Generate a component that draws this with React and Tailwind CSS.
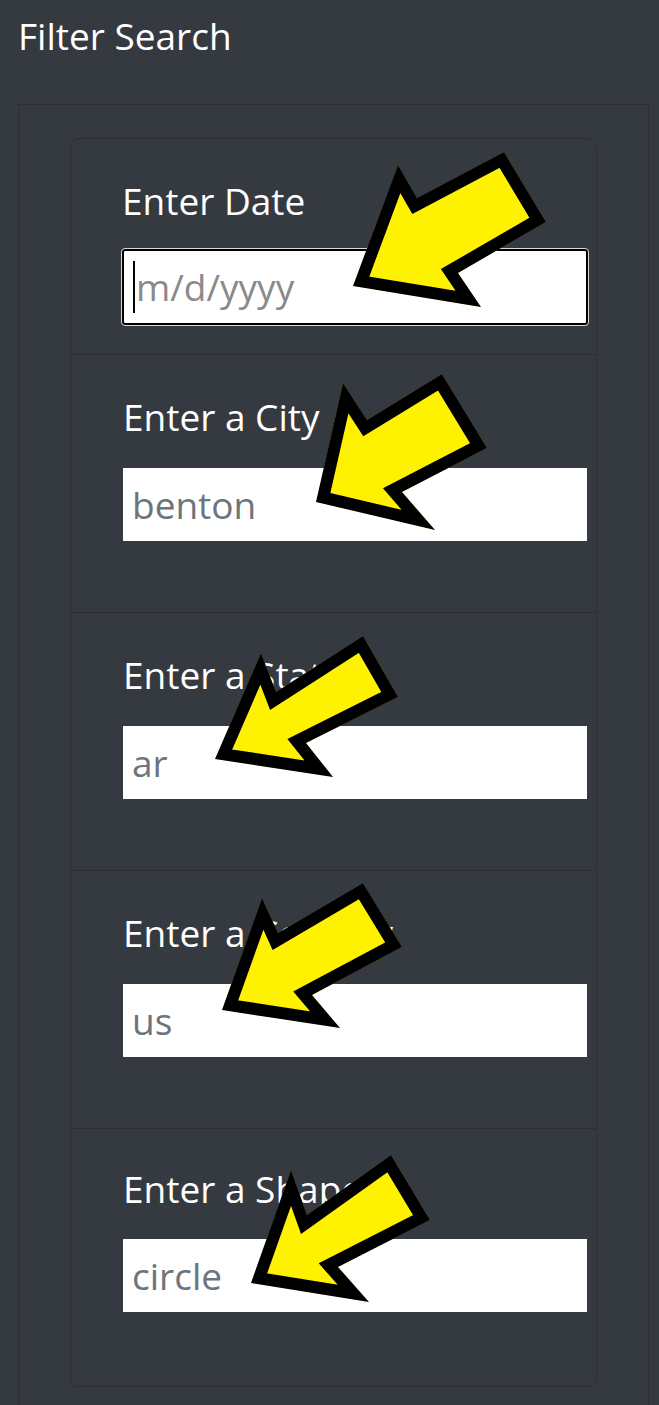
import React from 'react';

const arrows = [
  '353,286 398,165 417,198 504,152 546,222 458,273 481,307',
  '316,502 343,383 367,420 442,374 487,448 402,492 435,530',
  '215,759 261,653 276,692 363,636 398,697 306,743 333,777',
  '222,1010 262,898 278,933 363,883 402,947 312,995 340,1028',
  '251,1283 291,1170 307,1215 391,1155 430,1220 338,1267 369,1302',
];

const ArrowLayer = () => (
  <svg
    className="absolute left-0 top-0 pointer-events-none"
    width="659"
    height="1405"
    viewBox="0 0 659 1405"
  >
    <defs>
      {arrows.map((pts, i) => (
        <clipPath id={`arrow-clip-${i}`} key={i}>
          <polygon points={pts} />
        </clipPath>
      ))}
    </defs>
    {arrows.map((pts, i) => (
      <polygon
        key={i}
        points={pts}
        fill="#fff200"
        stroke="#000"
        strokeWidth="24"
        strokeLinejoin="miter"
        clipPath={`url(#arrow-clip-${i})`}
      />
    ))}
  </svg>
);

const FieldRow = ({ label, value, last }) => (
  <div
    className={
      last
        ? 'pl-[52px] pr-[9px] pt-[38px] pb-[74px]'
        : 'pl-[52px] pr-[9px] pt-[40px] pb-[71px] border-b border-[#2c3036]'
    }
  >
    <div className={`text-[37px] leading-[44px] text-white ${last ? 'mb-[28px]' : 'mb-[29px]'}`}>{label}</div>
    <div className="h-[73px] bg-white flex items-center pl-[9px] text-[37px] text-[#6c757d]">
      {value}
    </div>
  </div>
);

export default function App() {
  return (
    <div className="relative w-full min-h-screen bg-[#353940] font-['Open_Sans',sans-serif] overflow-hidden">
      <div className="px-[18px] pt-[10px] text-[37px] leading-[52px] text-white">Filter Search</div>

      <div className="mt-[42px] ml-[18px] mr-[10px] border border-[#2c3036] pl-[51px] pr-[51px] pt-[33px] pb-[40px]">
        <div className="border border-[#2c3036] rounded-lg">
          {/* date row, focused */}
          <div className="pl-[51px] pr-[8px] pt-[40px] pb-[29px] border-b border-[#2c3036]">
            <div className="text-[37px] leading-[44px] text-white mb-[26px]">Enter Date</div>
            <div className="h-[76px] bg-white border-2 border-black rounded-[3px] outline outline-1 outline-[#d8d8d8] flex items-center pl-[9px] text-[37px] text-[#8a8a8a]">
              <span className="w-[2px] h-[52px] bg-black mr-[1px]" />
              m/d/yyyy
            </div>
          </div>
          <FieldRow label="Enter a City" value="benton" />
          <FieldRow label="Enter a State" value="ar" />
          <FieldRow label="Enter a Country" value="us" />
          <FieldRow label="Enter a Shape" value="circle" last />
        </div>
      </div>

      <ArrowLayer />
    </div>
  );
}
